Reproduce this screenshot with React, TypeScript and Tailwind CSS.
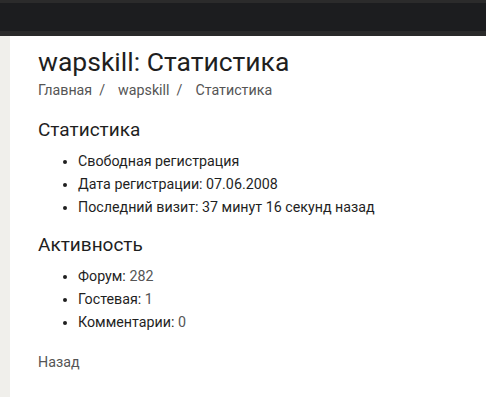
const stats = [
  'Свободная регистрация',
  'Дата регистрации: 07.06.2008',
  'Последний визит: 37 минут 16 секунд назад',
];

const activity: { label: string; value: string }[] = [
  { label: 'Форум:', value: '282' },
  { label: 'Гостевая:', value: '1' },
  { label: 'Комментарии:', value: '0' },
];

const crumbs = ['Главная', 'wapskill', 'Статистика'];

export default function App() {
  return (
    <div className="h-[397px] w-[486px] overflow-hidden bg-white font-['Roboto',sans-serif] text-[#1f1f1f]">
      <div className="h-[36px] border-t-[3px] border-b-[5px] border-t-[#2b2b2b] border-b-[#2a2a2a] bg-[#1c1d1f]" />
      <div className="flex h-[361px]">
        <div className="w-[10px] shrink-0 bg-[#f0efeb]" />
        <main className="flex-1 pl-[28px] pt-[10px]">
          <h1 className="text-[26.5px] leading-[32px] font-normal">wapskill: Статистика</h1>
          <nav className="mt-[2px] flex text-[14.25px] leading-[20px] text-[#555]">
            {crumbs.map((c, i) => (
              <span key={c}>
                {i > 0 && <span className="ml-[7px] mr-[13px]">/</span>}
                {c}
              </span>
            ))}
          </nav>

          <h2 className="mt-[18px] text-[19px] leading-[24px]">Статистика</h2>
          <ul className="mt-[8px] list-disc pl-[40px] text-[14.25px] leading-[23px]">
            {stats.map((s) => (
              <li key={s}>{s}</li>
            ))}
          </ul>

          <h2 className="mt-[14px] text-[19px] leading-[24px]">Активность</h2>
          <ul className="mt-[8px] list-disc pl-[40px] text-[14.25px] leading-[23px]">
            {activity.map((a) => (
              <li key={a.label}>
                {a.label} <span className="text-[#555]">{a.value}</span>
              </li>
            ))}
          </ul>

          <a className="mt-[18px] block text-[14.25px] leading-[20px] text-[#555]">Назад</a>
        </main>
      </div>
    </div>
  );
}
